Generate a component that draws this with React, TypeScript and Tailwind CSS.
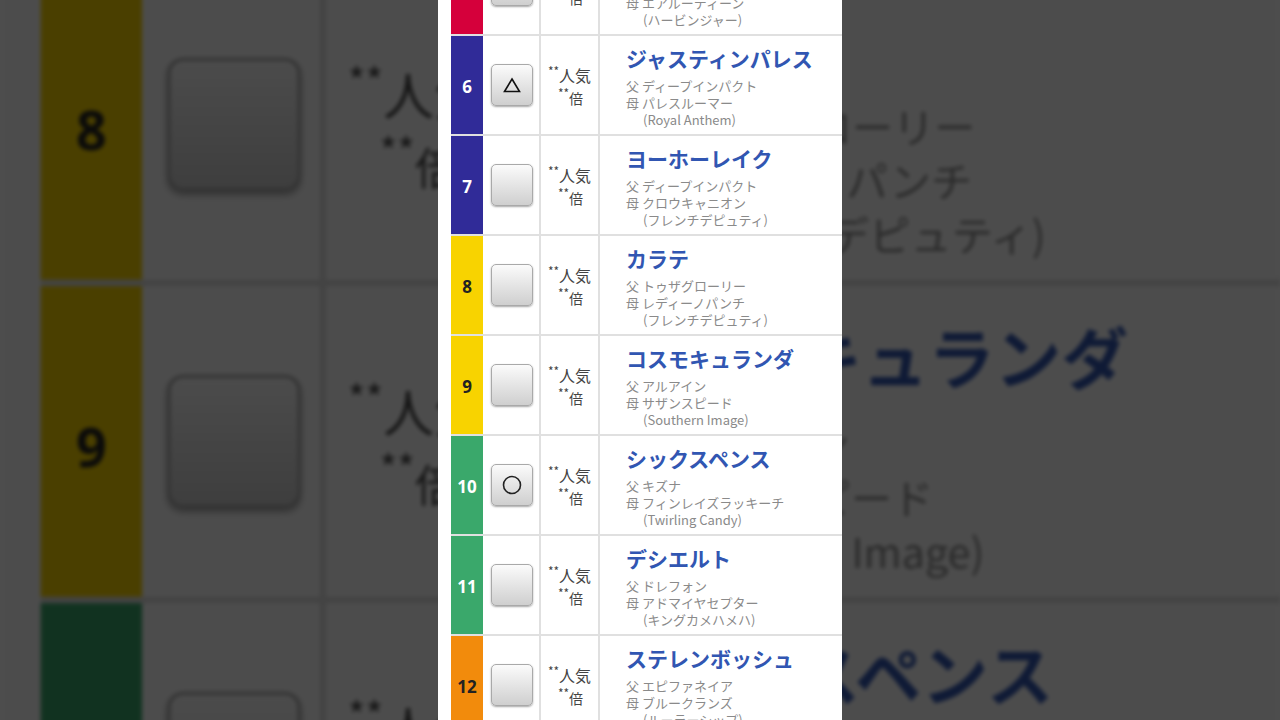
import React from "react";

type Row = {
  no: number;
  color: string;
  numColor: string;
  name: string;
  sire: string;
  dam: string;
  bms: string;
  mark?: string;
};

const rows: Row[] = [
  { no: 5, color: "bg-[#d5003b]", numColor: "text-white", name: "ベラジオオペラ", sire: "ロードカナロア", dam: "エアルーティーン", bms: "(ハービンジャー)" },
  { no: 6, color: "bg-[#302b98]", numColor: "text-white", name: "ジャスティンパレス", sire: "ディープインパクト", dam: "パレスルーマー", bms: "(Royal Anthem)", mark: "△" },
  { no: 7, color: "bg-[#302b98]", numColor: "text-white", name: "ヨーホーレイク", sire: "ディープインパクト", dam: "クロウキャニオン", bms: "(フレンチデピュティ)" },
  { no: 8, color: "bg-[#f8d300]", numColor: "text-[#222]", name: "カラテ", sire: "トゥザグローリー", dam: "レディーノパンチ", bms: "(フレンチデピュティ)" },
  { no: 9, color: "bg-[#f8d300]", numColor: "text-[#222]", name: "コスモキュランダ", sire: "アルアイン", dam: "サザンスピード", bms: "(Southern Image)" },
  { no: 10, color: "bg-[#3aa86b]", numColor: "text-white", name: "シックスペンス", sire: "キズナ", dam: "フィンレイズラッキーチ", bms: "(Twirling Candy)", mark: "○" },
  { no: 11, color: "bg-[#3aa86b]", numColor: "text-white", name: "デシエルト", sire: "ドレフォン", dam: "アドマイヤセプター", bms: "(キングカメハメハ)" },
  { no: 12, color: "bg-[#f28b0c]", numColor: "text-[#222]", name: "ステレンボッシュ", sire: "エピファネイア", dam: "ブルークランズ", bms: "(ルーラーシップ)" },
  { no: 13, color: "bg-[#f28b0c]", numColor: "text-[#222]", name: "ロードデルレイ", sire: "ロードカナロア", dam: "デルフォイ", bms: "(シンボリクリスエス)" },
];

const jp = "font-['Noto_Sans_CJK_JP','Noto_Sans',sans-serif]";

function RaceRow({ r }: { r: Row }) {
  return (
    <div className="flex h-[100px] border-b-2 border-[#e0e0e0]">
      <div className={`w-[32px] shrink-0 flex items-center justify-center pt-[3px] ${r.color}`}>
        <span className={`font-['Noto_Sans',sans-serif] font-bold text-[17px] ${r.numColor}`}>{r.no}</span>
      </div>
      <div className="w-[58px] shrink-0 flex items-center justify-center border-r-2 border-[#e0e0e0] pl-[2px]">
        <div className="w-[42px] h-[42px] rounded-[5px] border border-[#a9a9a9] bg-gradient-to-b from-[#fbfbfb] to-[#cfcfcf] shadow-[0_1px_2px_rgba(0,0,0,0.35)] flex items-center justify-center">
          {r.mark === "△" && (
            <svg width="18" height="16" viewBox="0 0 18 16">
              <path d="M9 2 L16.5 14.5 L1.5 14.5 Z" fill="none" stroke="#111" strokeWidth="1.6" strokeLinejoin="miter" />
            </svg>
          )}
          {r.mark === "○" && (
            <svg width="22" height="22" viewBox="0 0 22 22">
              <circle cx="11" cy="11" r="8.5" fill="none" stroke="#222" strokeWidth="1.6" />
            </svg>
          )}
        </div>
      </div>
      <div className={`w-[59px] shrink-0 flex flex-col items-center justify-center border-r-2 border-[#e0e0e0] text-[#444] pt-[3px] ${jp}`}>
        <div className="leading-[23px] text-[16px]">
          <span className="text-[12px] align-top leading-[14px]">**</span>人気
        </div>
        <div className="leading-[22px] text-[14px] pl-[2px]">
          <span className="text-[12px] align-top leading-[12px]">**</span>倍
        </div>
      </div>
      <div className={`flex-1 pl-[26px] pt-[9px] ${jp}`}>
        <div className="text-[21px] leading-[26px] font-bold text-[#3156b2] whitespace-nowrap">{r.name}</div>
        <div className="mt-[6px] text-[13px] leading-[17px] text-[#8a8a8a] whitespace-nowrap">
          <div>父 {r.sire}</div>
          <div>母 {r.dam}</div>
          <div className="pl-[17px]">{r.bms}</div>
        </div>
      </div>
    </div>
  );
}

function Column() {
  return (
    <div className="w-[404px] h-[720px] bg-white overflow-hidden pl-[13px]">
      <div className="-mt-[64px]">
        {rows.map((r) => (
          <RaceRow key={r.no} r={r} />
        ))}
      </div>
    </div>
  );
}

export default function App() {
  return (
    <div className="relative w-[1280px] h-[720px] overflow-hidden bg-[#4d4d4d]">
      <div className="absolute inset-0 brightness-[0.3] blur-[2px]">
        <div className="absolute inset-0 origin-top-left [transform:matrix(3.17,0,0,3.17,-1389,-779)] flex justify-center">
          <Column />
        </div>
      </div>
      <div className="relative flex justify-center">
        <Column />
      </div>
    </div>
  );
}
